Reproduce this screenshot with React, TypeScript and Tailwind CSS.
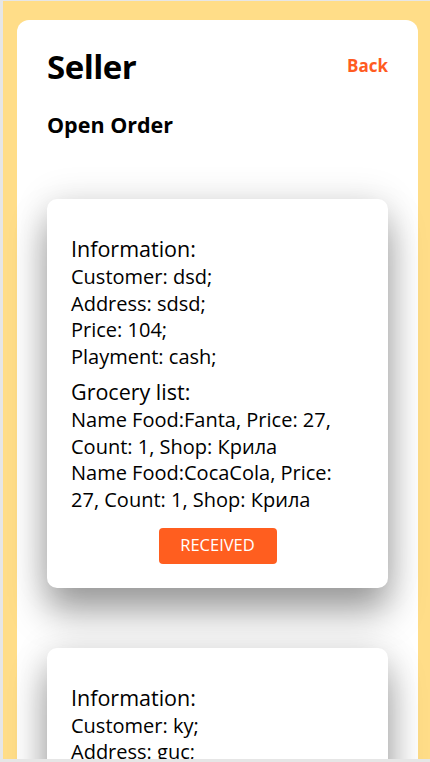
import React from "react";

type Item = { name: string; price: number; count: number; shop: string };
type Order = { customer: string; address: string; price: number; payment: string; items: Item[] };

const orders: Order[] = [
  {
    customer: "dsd",
    address: "sdsd",
    price: 104,
    payment: "cash",
    items: [
      { name: "Fanta", price: 27, count: 1, shop: "Крила" },
      { name: "CocaCola", price: 27, count: 1, shop: "Крила" },
    ],
  },
  {
    customer: "ky",
    address: "guc",
    price: 54,
    payment: "cash",
    items: [{ name: "Fanta", price: 27, count: 1, shop: "Крила" }],
  },
];

function OrderCard({ o }: { o: Order }) {
  return (
    <div className="bg-white rounded-[10px] pl-6 pr-[32px] pt-[35px] pb-6 shadow-[0_24px_36px_rgba(0,0,0,0.36),0_0_36px_rgba(0,0,0,0.12)]">
      <div className="text-[21.5px] leading-[30px]">Information:</div>
      <div className="text-[20px] leading-[26.7px]">
        <div>Customer: {o.customer};</div>
        <div>Address: {o.address};</div>
        <div>Price: {o.price};</div>
        <div>Playment: {o.payment};</div>
      </div>
      <div className="text-[21.5px] leading-[30px] mt-[6px]">Grocery list:</div>
      <div className="text-[20px] leading-[26.7px]">
        {o.items.map((it, i) => (
          <div key={i}>
            Name Food:{it.name}, Price: {it.price}, Count: {it.count}, Shop: {it.shop}
          </div>
        ))}
      </div>
      <div className="flex justify-center mt-[14px] pl-[8px]">
        <button className="w-[118px] h-[36px] rounded-[4px] bg-[#ff5e1f] text-white text-[16.5px] uppercase">
          Received
        </button>
      </div>
    </div>
  );
}

export default function App() {
  return (
    <div
      className="w-[430px] h-[762px] overflow-hidden bg-[#ffdd88] border-l-[3px] border-t border-b-[3px] border-[#e6e6e6] text-black"
      style={{ fontFamily: "'Open Sans', 'Noto Sans', sans-serif" }}
    >
      <div className="ml-[14px] mr-[12px] mt-[19px] bg-white rounded-t-[12px] px-[30px] pt-[25px] pb-10 min-h-[800px]">
        <div className="flex items-start justify-between">
          <h1 className="text-[33px] leading-[44px] font-bold tracking-[-0.5px]">Seller</h1>
          <button className="text-[#ff5b22] text-[17px] font-bold leading-[22px] mt-[10px]">Back</button>
        </div>
        <h2 className="text-[21.5px] font-bold leading-[28px] mt-[22px]">Open Order</h2>
        <div className="flex flex-col gap-[60px] mt-[60px]">
          {orders.map((o, i) => (
            <OrderCard key={i} o={o} />
          ))}
        </div>
      </div>
    </div>
  );
}
